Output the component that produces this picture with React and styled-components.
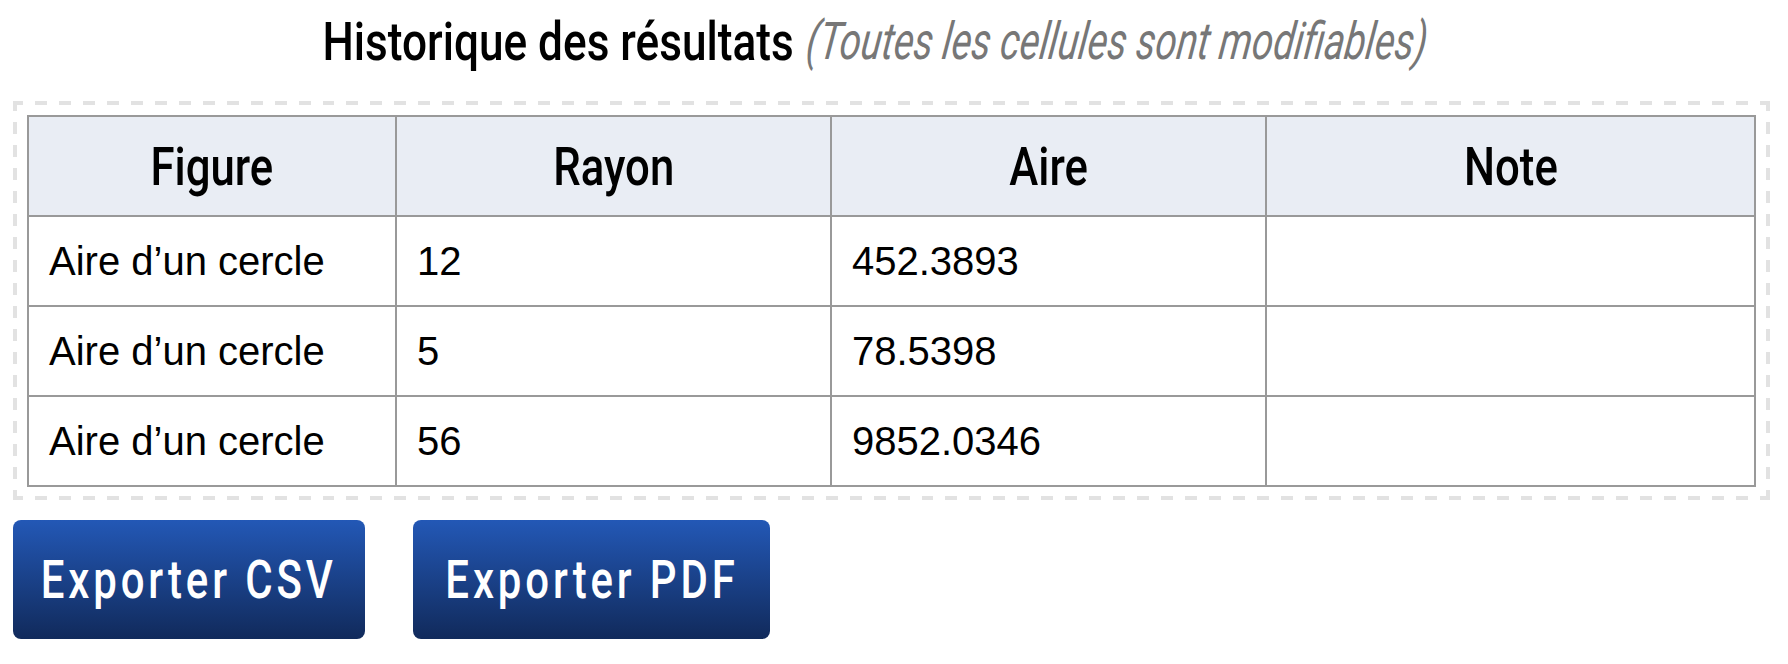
import React from "react";
import styled, { createGlobalStyle } from "styled-components";

const Global = createGlobalStyle`
  html, body { margin: 0; padding: 0; background: #fff; }
  body { font-family: "Liberation Sans", Arial, sans-serif; color: #000; }
`;

const Page = styled.div`
  width: 1788px;
  height: 664px;
  box-sizing: border-box;
  padding: 0 18px 0 13px;
  overflow: hidden;
`;

const Title = styled.h2`
  margin: 0;
  height: 101px;
  padding-right: 32px;
  box-sizing: border-box;
  display: flex;
  justify-content: center;
  align-items: center;
  padding-bottom: 17px;
  gap: 13px;
  white-space: nowrap;
  font-family: Roboto, "Liberation Sans", sans-serif;
  font-size: 54px;
  font-weight: 500;
  line-height: 1;
`;

const TitleMain = styled.span`
  display: inline-block;
  width: 471px;
  text-align: center;
`;

const TitleNote = styled.em`
  display: inline-block;
  width: 622px;
  text-align: center;
  color: #777;
  font-weight: 400;
  font-size: 52px;
`;

const Squeeze = styled.span`
  display: inline-block;
  margin: 0 -200px;
  transform: ${(p) => p.$t};
`;

const dashX = "repeating-linear-gradient(90deg, #e2e2e2 0 10px, transparent 10px 22px, #e2e2e2 22px 23.96px)";
const dashY = "repeating-linear-gradient(180deg, #e2e2e2 0 10px, transparent 10px 21px, #e2e2e2 21px 23px)";

const Frame = styled.div`
  box-sizing: border-box;
  height: 399px;
  padding: 14px 16px 14px 14px;
  background-image: ${dashX}, ${dashX}, ${dashY}, ${dashY};
  background-repeat: no-repeat;
  background-size: 100% 4px, 100% 4px, 4px 100%, 4px 100%;
  background-position: left top, left bottom, left top, right top;
`;

const Table = styled.table`
  width: 100%;
  table-layout: fixed;
  border-collapse: collapse;
`;

const HeadCell = styled.th`
  box-sizing: border-box;
  height: 100px;
  padding: 0;
  background: #e9edf4;
  border: 2px solid #999;
  font-family: Roboto, "Liberation Sans", sans-serif;
  font-size: 54px;
  font-weight: 500;
  text-align: center;
  white-space: nowrap;
  width: ${(p) => p.$w}px;
`;

const Cell = styled.td`
  height: 90px;
  padding: 1px 20px 0;
  border: 2px solid #999;
  font-size: 40px;
  box-sizing: border-box;
`;

const Actions = styled.div`
  display: flex;
  gap: 48px;
  margin-top: 20px;
`;

const Button = styled.button`
  width: ${(p) => p.$w}px;
  height: 119px;
  padding: 0;
  border: none;
  border-radius: 8px;
  background: linear-gradient(#2358b6, #112a5b);
  color: #fff;
  font-family: Roboto, "Liberation Sans", sans-serif;
  font-size: 54px;
  font-weight: 500;
  letter-spacing: 5px;
  white-space: nowrap;
  overflow: hidden;
`;

const heads = [
  ["Figure", 368],
  ["Rayon", 435],
  ["Aire", 435],
  ["Note", 489],
];
const rows = [
  ["Aire d’un cercle", "12", "452.3893", ""],
  ["Aire d’un cercle", "5", "78.5398", ""],
  ["Aire d’un cercle", "56", "9852.0346", ""],
];

export default function App() {
  return (
    <Page>
      <Global />
      <Title>
        <TitleMain>
          <Squeeze $t="scaleX(0.818)">Historique des résultats</Squeeze>
        </TitleMain>
        <TitleNote>
          <Squeeze $t="scaleX(0.742) skewX(-10deg)">(Toutes les cellules sont modifiables)</Squeeze>
        </TitleNote>
      </Title>
      <Frame>
        <Table>
          <thead>
            <tr>
              {heads.map(([h, w]) => (
                <HeadCell key={h} $w={w}>
                  <Squeeze $t="scaleX(0.81)">{h}</Squeeze>
                </HeadCell>
              ))}
            </tr>
          </thead>
          <tbody>
            {rows.map((r, i) => (
              <tr key={i}>
                {r.map((c, j) => (
                  <Cell key={j}>{c}</Cell>
                ))}
              </tr>
            ))}
          </tbody>
        </Table>
      </Frame>
      <Actions>
        <Button $w={352}>
          <Squeeze $t="scaleX(0.776)">Exporter CSV</Squeeze>
        </Button>
        <Button $w={357}>
          <Squeeze $t="scaleX(0.776)">Exporter PDF</Squeeze>
        </Button>
      </Actions>
    </Page>
  );
}
